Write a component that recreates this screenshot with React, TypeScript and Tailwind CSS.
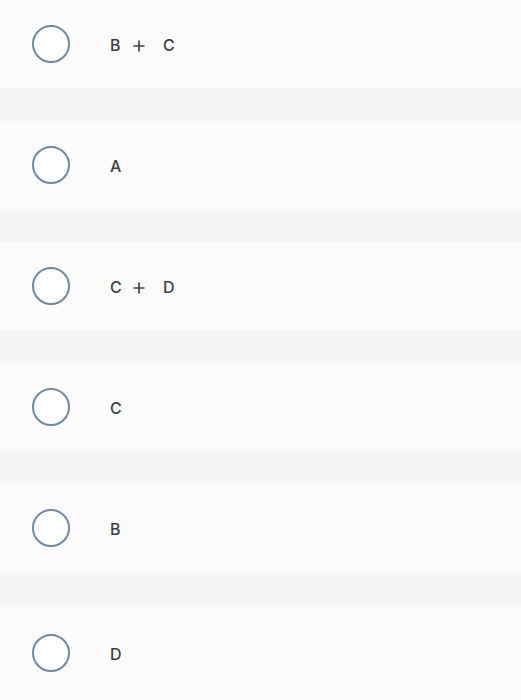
import React from "react";

const options: string[][] = [["B", "+", "C"], ["A"], ["C", "+", "D"], ["C"], ["B"], ["D"]];

function Plus() {
  return (
    <svg width="12" height="12" viewBox="0 0 12 12" className="mt-[1px]">
      <path d="M6 0.5V11.5M0.5 6H11.5" stroke="#444444" strokeWidth="1.7" fill="none" />
    </svg>
  );
}

export default function App() {
  return (
    <div className="w-[521px] h-[700px] overflow-hidden bg-[#f5f5f5] flex flex-col gap-[33px]" style={{ fontFamily: "Inter, 'Liberation Sans', sans-serif" }}>
      {options.map((parts, i) => (
        <div key={i} className="h-[88px] shrink-0 bg-[#fbfbfb] flex items-center pl-[32px] last:h-[95px]">
          <div className="w-[38px] h-[38px] rounded-full border-2 border-[#7089a3] bg-white shrink-0" />
          <div className="ml-[40px] mt-[2px] flex items-center text-[16px] font-medium text-[#3f3f3f] tracking-[0.5px]">
            {parts.length === 1 ? (
              <span>{parts[0]}</span>
            ) : (
              <>
                <span className="w-[23px]">{parts[0]}</span>
                <span className="w-[30px] flex"><Plus /></span>
                <span>{parts[2]}</span>
              </>
            )}
          </div>
        </div>
      ))}
    </div>
  );
}
